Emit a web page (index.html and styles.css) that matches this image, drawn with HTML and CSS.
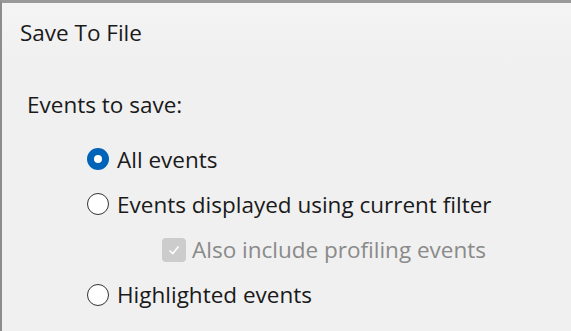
FILE: index.html
```html
<!DOCTYPE html>
<html lang="en">
<head>
    <meta charset="UTF-8">
    <title>Save To File</title>
    <link rel="stylesheet" href="styles.css">
</head>
<body>
    <div class="dialog">
        <div class="title-bar">Save To File</div>
        <div class="content">
            <div class="group-label">Events to save:</div>
            <div class="options">
                <label class="option">
                    <span class="radio checked"></span>
                    <span>All events</span>
                </label>
                <label class="option">
                    <span class="radio"></span>
                    <span>Events displayed using current filter</span>
                </label>
                <label class="option sub disabled">
                    <span class="checkbox">
                        <svg width="16" height="16" viewBox="0 0 16 16"><path d="M3.5 8.5 L6.8 11.5 L12.5 4.5" fill="none" stroke="#fff" stroke-width="1.6"/></svg>
                    </span>
                    <span>Also include profiling events</span>
                </label>
                <label class="option">
                    <span class="radio"></span>
                    <span>Highlighted events</span>
                </label>
            </div>
        </div>
    </div>
</body>
</html>
```

FILE: styles.css
```css
body {
    margin: 0;
    background: #f0f0f0;
    font-family: "Open Sans", "Noto Sans", sans-serif;
    color: #1a1a1a;
}

.dialog {
    width: 571px;
    height: 331px;
    box-sizing: border-box;
    border-top: 3px solid #9a9a9a;
    border-left: 2px solid #8c8c8c;
    background: #f0f0f0;
    overflow: hidden;
}

/* شريط العنوان */
.title-bar {
    height: 60px;
    padding-left: 18px;
    padding-top: 14px;
    box-sizing: border-box;
    font-size: 22.5px;
    background: linear-gradient(#f4f4f4, #f0f0f0);
}

.content {
    padding: 26px 0 0 25px;
}

.group-label {
    font-size: 22.5px;
}

.options {
    display: flex;
    flex-direction: column;
    gap: 15.3px;
    padding: 24px 0 0 60px;
}

.option {
    display: flex;
    align-items: center;
    gap: 8px;
    font-size: 22.5px;
    height: 30px;
}

.option.sub {
    padding-left: 75px;
    gap: 6px;
}

.option.disabled {
    color: #8a8a8a;
}

.radio {
    width: 22px;
    height: 22px;
    border-radius: 50%;
    border: 1.5px solid #333;
    box-sizing: border-box;
    background: #fff;
    flex-shrink: 0;
}

.radio.checked {
    border: 7px solid #0063b8;
}

.checkbox {
    width: 24px;
    height: 24px;
    border-radius: 4px;
    background: #cccccc;
    display: flex;
    align-items: center;
    justify-content: center;
    flex-shrink: 0;
}
```
